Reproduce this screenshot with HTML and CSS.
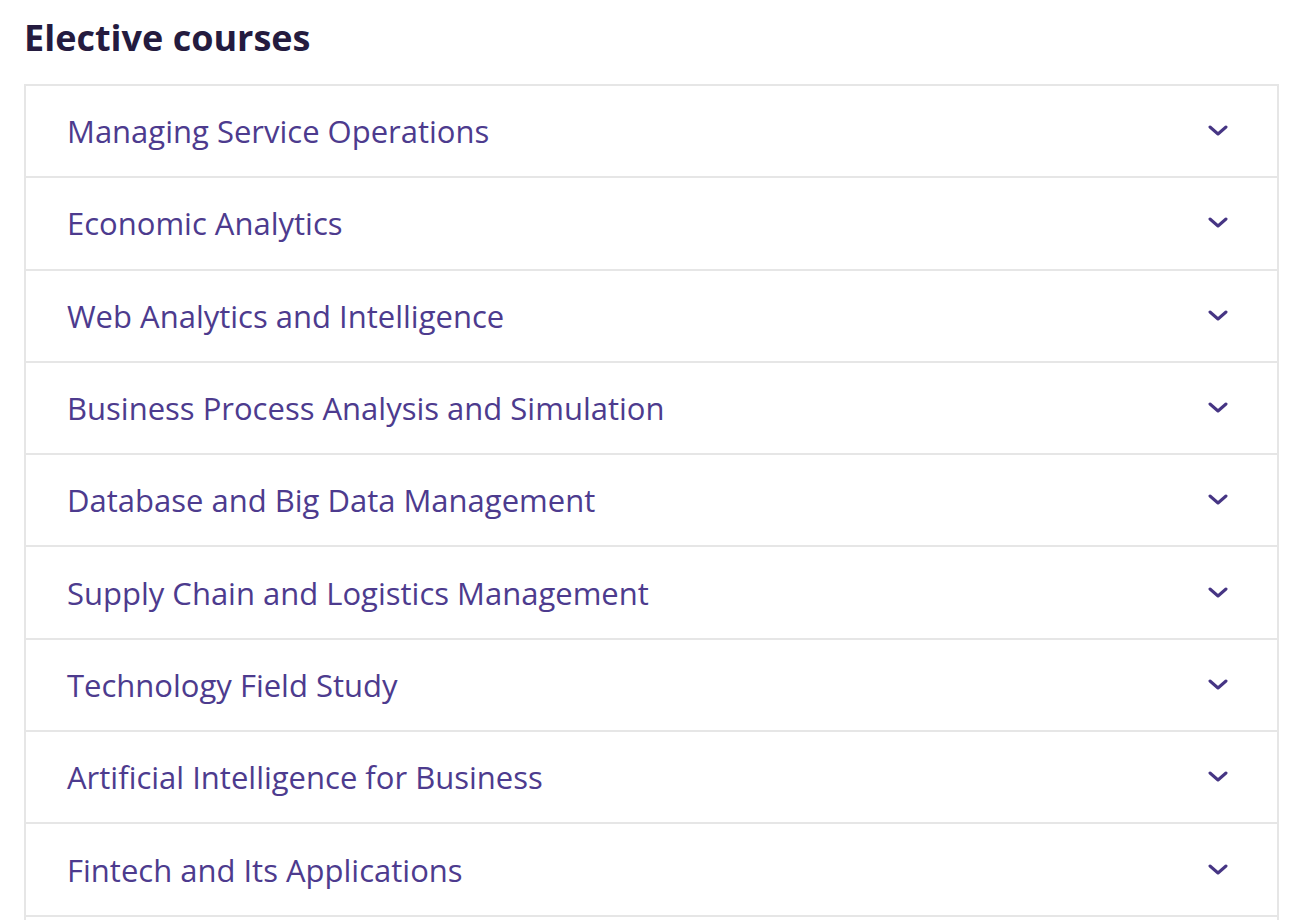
FILE: index.html
```html
<!DOCTYPE html>
<html lang="en">
<head>
  <meta charset="UTF-8">
  <meta name="viewport" content="width=device-width, initial-scale=1.0">
  <title>Elective courses</title>
  <link rel="stylesheet" href="styles.css">
</head>
<body>

  <!-- Elective courses section -->
  <section class="courses">
    <h2 class="courses-title">Elective courses</h2>

    <!-- Accordion list -->
    <div class="accordion">
      <div class="accordion-item">
        <span class="course-name">Managing Service Operations</span>
        <svg class="chevron" viewBox="0 0 20 12"><path d="M2 2l8 7 8-7"/></svg>
      </div>
      <div class="accordion-item">
        <span class="course-name">Economic Analytics</span>
        <svg class="chevron" viewBox="0 0 20 12"><path d="M2 2l8 7 8-7"/></svg>
      </div>
      <div class="accordion-item">
        <span class="course-name">Web Analytics and Intelligence</span>
        <svg class="chevron" viewBox="0 0 20 12"><path d="M2 2l8 7 8-7"/></svg>
      </div>
      <div class="accordion-item">
        <span class="course-name">Business Process Analysis and Simulation</span>
        <svg class="chevron" viewBox="0 0 20 12"><path d="M2 2l8 7 8-7"/></svg>
      </div>
      <div class="accordion-item">
        <span class="course-name">Database and Big Data Management</span>
        <svg class="chevron" viewBox="0 0 20 12"><path d="M2 2l8 7 8-7"/></svg>
      </div>
      <div class="accordion-item">
        <span class="course-name">Supply Chain and Logistics Management</span>
        <svg class="chevron" viewBox="0 0 20 12"><path d="M2 2l8 7 8-7"/></svg>
      </div>
      <div class="accordion-item">
        <span class="course-name">Technology Field Study</span>
        <svg class="chevron" viewBox="0 0 20 12"><path d="M2 2l8 7 8-7"/></svg>
      </div>
      <div class="accordion-item">
        <span class="course-name">Artificial Intelligence for Business</span>
        <svg class="chevron" viewBox="0 0 20 12"><path d="M2 2l8 7 8-7"/></svg>
      </div>
      <div class="accordion-item">
        <span class="course-name">Fintech and Its Applications</span>
        <svg class="chevron" viewBox="0 0 20 12"><path d="M2 2l8 7 8-7"/></svg>
      </div>
      <!-- next row starts just below the fold -->
      <div class="accordion-item accordion-item-empty"></div>
    </div>
  </section>

</body>
</html>
```

FILE: styles.css
```css
/* General Page Styling */
body, html {
  margin: 0;
  padding: 0;
  background-color: white;
  font-family: 'Open Sans', sans-serif;
}

body {
  height: 920px;
  overflow: hidden;
}

/* Section */
.courses {
  padding: 11px 19px 0 24px;
}

.courses-title {
  margin: 0 0 19px;
  font-size: 36px;
  font-weight: 700;
  line-height: 54px;
  color: #241b3f;
}

/* Accordion */
.accordion {
  border-top: 2px solid #e6e6e6;
  border-left: 2px solid #e6e6e6;
  border-right: 2px solid #e6e6e6;
}

.accordion-item {
  display: flex;
  justify-content: space-between;
  align-items: center;
  box-sizing: border-box;
  height: 92.3px;
  padding: 0 49px 0 41px;
  border-bottom: 2px solid #e6e6e6;
  cursor: pointer;
}

.course-name {
  font-size: 31px;
  color: #4d3b8e;
}

.chevron {
  width: 20px;
  height: 12px;
  fill: none;
  stroke: #463584;
  stroke-width: 3;
  stroke-linecap: round;
  stroke-linejoin: round;
}
```
